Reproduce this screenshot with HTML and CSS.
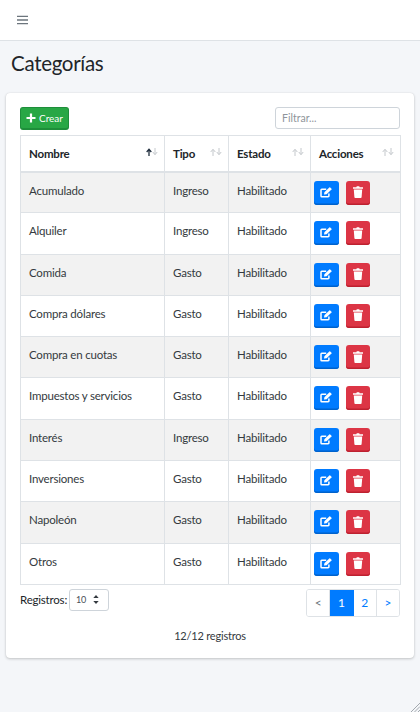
FILE: index.html
```html
<!DOCTYPE html>
<html lang="es">
<head>
<meta charset="utf-8">
<title>Categorías</title>
<link rel="stylesheet" href="styles.css">
</head>
<body>
<svg class="defs" width="0" height="0" aria-hidden="true">
  <symbol id="i-edit" viewBox="0 0 13 11"><path d="M8.9 6.4v2.5a.8.8 0 0 1-.8.8H1.8a.8.8 0 0 1-.8-.8V3a.8.8 0 0 1 .8-.8h4.4" stroke="#fff" stroke-width="1.5" fill="none"/><path d="M4 7.6l.4-2.3L9.3.4a.6.6 0 0 1 .9 0l1.3 1.3a.6.6 0 0 1 0 .9L6.6 7.3z" fill="#fff"/></symbol>
  <symbol id="i-trash" viewBox="0 0 10 12"><path d="M0 1.2h3.3L3.8.2h2.4l.5 1H10v1.5H0zM.8 3.4h8.4l-.6 7.8a.9.9 0 0 1-.9.8H2.3a.9.9 0 0 1-.9-.8z" fill="#fff"/></symbol>
</svg>
<nav class="navbar">
  <svg class="burger" viewBox="0 0 12 10" width="11" height="10"><path d="M0 1h12M0 5h12M0 9h12" stroke="#6c757d" stroke-width="1.5" fill="none"/></svg>
</nav>
<main class="content">
  <h1 class="title">Categorías</h1>
  <section class="card">
    <div class="toolbar">
      <button class="btn-create"><svg viewBox="0 0 10 10" width="10" height="10"><path d="M5 .5v9M.5 5h9" stroke="#fff" stroke-width="2.2"/></svg><span>Crear</span></button>
      <input class="filter" placeholder="Filtrar...">
    </div>
    <table class="grid">
      <colgroup><col class="c1"><col class="c2"><col class="c3"><col class="c4"></colgroup>
      <thead>
        <tr>
          <th><div class="th"><span>Nombre</span><svg class="sort" viewBox="0 0 12 8" width="12" height="8"><path d="M3 8V2M.7 4 3 1.2 5.3 4" stroke="#1f2d3d" stroke-width="1.3" fill="none"/><path d="M9 0v6M6.8 4 9 6.8 11.2 4" stroke="#c4c8cc" stroke-width="1" fill="none"/></svg></div></th>
          <th><div class="th"><span>Tipo</span><svg class="sort" viewBox="0 0 12 8" width="12" height="8"><path d="M3 8V2M.7 4 3 1.2 5.3 4M9 0v6M6.8 4 9 6.8 11.2 4" stroke="#c4c8cc" stroke-width="1" fill="none"/></svg></div></th>
          <th><div class="th"><span>Estado</span><svg class="sort" viewBox="0 0 12 8" width="12" height="8"><path d="M3 8V2M.7 4 3 1.2 5.3 4M9 0v6M6.8 4 9 6.8 11.2 4" stroke="#c4c8cc" stroke-width="1" fill="none"/></svg></div></th>
          <th><div class="th"><span>Acciones</span><svg class="sort" viewBox="0 0 12 8" width="12" height="8"><path d="M3 8V2M.7 4 3 1.2 5.3 4M9 0v6M6.8 4 9 6.8 11.2 4" stroke="#c4c8cc" stroke-width="1" fill="none"/></svg></div></th>
        </tr>
      </thead>
      <tbody>
        <tr><td>Acumulado</td><td>Ingreso</td><td>Habilitado</td><td class="actions"><div class="acts"><button class="act edit"><svg width="13" height="11"><use href="#i-edit"/></svg></button><button class="act del"><svg width="10" height="12"><use href="#i-trash"/></svg></button></div></td></tr>
        <tr><td>Alquiler</td><td>Ingreso</td><td>Habilitado</td><td class="actions"><div class="acts"><button class="act edit"><svg width="13" height="11"><use href="#i-edit"/></svg></button><button class="act del"><svg width="10" height="12"><use href="#i-trash"/></svg></button></div></td></tr>
        <tr><td>Comida</td><td>Gasto</td><td>Habilitado</td><td class="actions"><div class="acts"><button class="act edit"><svg width="13" height="11"><use href="#i-edit"/></svg></button><button class="act del"><svg width="10" height="12"><use href="#i-trash"/></svg></button></div></td></tr>
        <tr><td>Compra dólares</td><td>Gasto</td><td>Habilitado</td><td class="actions"><div class="acts"><button class="act edit"><svg width="13" height="11"><use href="#i-edit"/></svg></button><button class="act del"><svg width="10" height="12"><use href="#i-trash"/></svg></button></div></td></tr>
        <tr><td>Compra en cuotas</td><td>Gasto</td><td>Habilitado</td><td class="actions"><div class="acts"><button class="act edit"><svg width="13" height="11"><use href="#i-edit"/></svg></button><button class="act del"><svg width="10" height="12"><use href="#i-trash"/></svg></button></div></td></tr>
        <tr><td>Impuestos y servicios</td><td>Gasto</td><td>Habilitado</td><td class="actions"><div class="acts"><button class="act edit"><svg width="13" height="11"><use href="#i-edit"/></svg></button><button class="act del"><svg width="10" height="12"><use href="#i-trash"/></svg></button></div></td></tr>
        <tr><td>Interés</td><td>Ingreso</td><td>Habilitado</td><td class="actions"><div class="acts"><button class="act edit"><svg width="13" height="11"><use href="#i-edit"/></svg></button><button class="act del"><svg width="10" height="12"><use href="#i-trash"/></svg></button></div></td></tr>
        <tr><td>Inversiones</td><td>Gasto</td><td>Habilitado</td><td class="actions"><div class="acts"><button class="act edit"><svg width="13" height="11"><use href="#i-edit"/></svg></button><button class="act del"><svg width="10" height="12"><use href="#i-trash"/></svg></button></div></td></tr>
        <tr><td>Napoleón</td><td>Gasto</td><td>Habilitado</td><td class="actions"><div class="acts"><button class="act edit"><svg width="13" height="11"><use href="#i-edit"/></svg></button><button class="act del"><svg width="10" height="12"><use href="#i-trash"/></svg></button></div></td></tr>
        <tr><td>Otros</td><td>Gasto</td><td>Habilitado</td><td class="actions"><div class="acts"><button class="act edit"><svg width="13" height="11"><use href="#i-edit"/></svg></button><button class="act del"><svg width="10" height="12"><use href="#i-trash"/></svg></button></div></td></tr>
      </tbody>
    </table>
    <div class="pager-row">
      <div class="page-size">
        <span>Registros:</span>
        <div class="select"><span>10</span><svg viewBox="0 0 6 9" width="6" height="9"><path d="M3 0l2.7 3H.3zM3 9L.3 6h5.4z" fill="#343a40"/></svg></div>
      </div>
      <div class="pagination">
        <span class="pg muted">&lt;</span><span class="pg active">1</span><span class="pg">2</span><span class="pg">&gt;</span>
      </div>
    </div>
    <p class="count">12/12 registros</p>
  </section>
</main>
<svg class="grip" viewBox="0 0 10 10" width="10" height="10"><path d="M10 1 1 10M10 4.5 4.5 10M10 8l-2 2" stroke="#9aa0a6" stroke-width=".9" fill="none"/></svg>
</body>
</html>
```
FILE: styles.css
```css
* { box-sizing: border-box; }
html, body { height: 100%; }
body {
  margin: 0;
  background: #f4f6f9;
  font-family: "Lato", "Noto Sans", sans-serif;
  font-size: 11.5px;
  letter-spacing: -0.2px;
  color: #212529;
  overflow: hidden;
}
.defs { position: absolute; }
.navbar {
  height: 41px;
  background: #fff;
  border-bottom: 1px solid #dee2e6;
  display: flex;
  align-items: center;
  padding: 0 17px;
}
.burger { display: block; }
.content { padding: 0 6px; }
.title {
  margin: 0;
  padding: 8px 5px 0;
  height: 52px;
  font-size: 20.5px;
  line-height: 28px;
  font-weight: 400;
  letter-spacing: -0.3px;
  color: #212529;
}
.card {
  background: #fff;
  border-radius: 4px;
  box-shadow: 0 0 1px rgba(0,0,0,.13), 0 1px 3px rgba(0,0,0,.2);
  padding: 14px 14px 0;
  height: 565px;
}
.toolbar {
  display: flex;
  justify-content: space-between;
  align-items: flex-start;
  height: 28px;
}
.btn-create {
  width: 49px;
  height: 23px;
  background: #28a745;
  border: 1px solid #1e8e3a;
  border-bottom-width: 2px;
  border-radius: 3px;
  color: #fff;
  font: inherit;
  font-size: 10px;
  padding: 0;
  display: flex;
  align-items: center;
  justify-content: center;
  gap: 3px;
}
.filter {
  width: 125px;
  height: 22px;
  border: 1px solid #ced4da;
  border-radius: 3px;
  padding: 0 6px;
  font: inherit;
  font-size: 10.5px;
  background: #fff;
}
.filter::placeholder { color: #8f959b; opacity: 1; }
.grid {
  width: 380px;
  border-collapse: collapse;
  table-layout: fixed;
}
.c1 { width: 144px; }
.c2 { width: 64px; }
.c3 { width: 82px; }
.c4 { width: 90px; }
.grid th, .grid td {
  border: 1px solid #dee2e6;
  padding: 0 8px;
  text-align: left;
}
.grid th {
  height: 36px;
  font-size: 11.5px;
  font-weight: 700;
  color: #212529;
  border-bottom-width: 2px;
}
.th { display: flex; justify-content: space-between; align-items: center; }
.sort { margin-top: -3px; margin-right: -2px; }
.grid td {
  height: 41.3px;
  vertical-align: top;
  padding-top: 11px;
  color: #343a40;
}
.grid td.actions { padding: 8px 0 0 3px; }
.grid tbody tr:nth-child(odd) { background: #f2f2f2; }
.acts { display: flex; gap: 7px; }
.act {
  height: 24px;
  border: 0;
  border-radius: 3px;
  padding: 0 0 1px;
  display: flex;
  align-items: center;
  justify-content: center;
}
.edit { width: 25px; background: #007bff; box-shadow: inset 0 -1.5px 0 #0062cc; }
.del { width: 24px; background: #dc3545; box-shadow: inset 0 -1.5px 0 #bd2130; }
.pager-row {
  display: flex;
  justify-content: space-between;
  align-items: flex-start;
  padding-top: 4px;
}
.page-size { display: flex; align-items: center; gap: 2px; }
.select {
  width: 40px;
  height: 22px;
  border: 1px solid #ced4da;
  border-radius: 3px;
  display: flex;
  align-items: center;
  justify-content: space-between;
  padding: 0 9px 0 6px;
  font-size: 9px;
  color: #495057;
}
.pagination {
  display: flex;
  height: 28px;
  border: 1px solid #dee2e6;
  border-radius: 3px;
  overflow: hidden;
  width: 94px;
}
.pg {
  flex: 1;
  display: flex;
  align-items: center;
  justify-content: center;
  color: #007bff;
  border-right: 1px solid #dee2e6;
  background: #fff;
  font-size: 12px;
}
.pg:last-child { border-right: 0; }
.pg.muted { color: #6c757d; }
.pg.active { background: #007bff; color: #fff; border-right-color: #007bff; }
.count {
  margin: 12px 0 0;
  text-align: center;
  font-size: 11px;
  color: #343a40;
}
.grip { position: fixed; right: 0; bottom: 0; }
```
